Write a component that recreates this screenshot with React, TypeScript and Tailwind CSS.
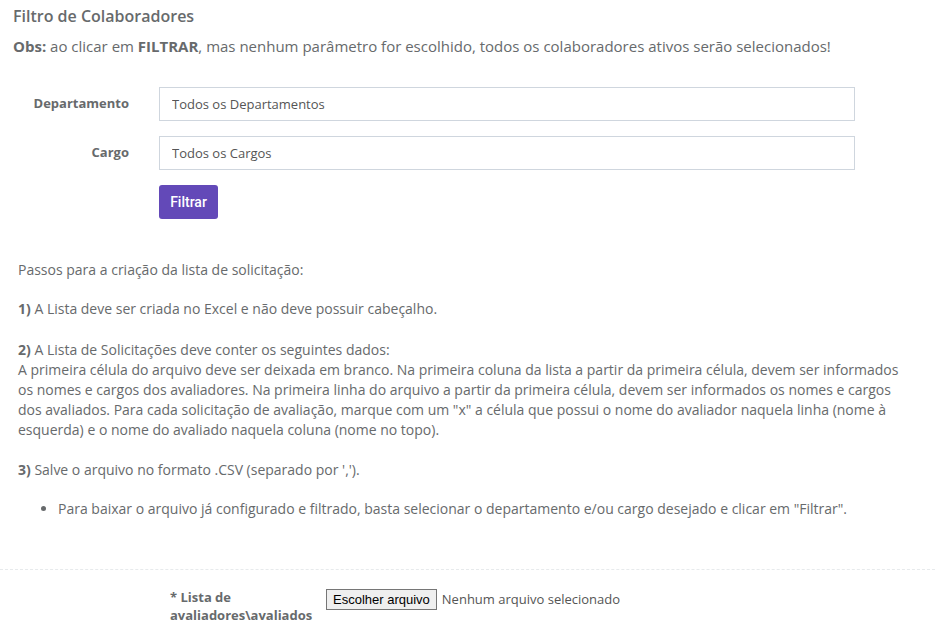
export default function App() {
  return (
    <div className="min-h-screen bg-white font-['Open_Sans',sans-serif] text-[#676a6c]">
      <div className="px-[13px] pt-[6px]">
        <h2 className="text-[16px] font-semibold leading-[20px]">Filtro de Colaboradores</h2>
        <p className="mt-[10px] text-[15px] leading-[20px]">
          <b>Obs:</b> ao clicar em <b>FILTRAR</b>, mas nenhum parâmetro for escolhido, todos os colaboradores ativos serão
          selecionados!
        </p>
      </div>

      <form className="mt-[31px] flex flex-col gap-[15px] pr-[80px]" onSubmit={(e) => e.preventDefault()}>
        <div className="grid grid-cols-[159px_1fr] items-center">
          <label className="pr-[30px] text-right text-[13px] font-bold">Departamento</label>
          <input
            readOnly
            value="Todos os Departamentos"
            className="h-[34px] w-full border border-[#cfd6de] px-[12px] text-[13px] text-[#555] outline-none"
          />
        </div>
        <div className="grid grid-cols-[159px_1fr] items-center">
          <label className="pr-[30px] text-right text-[13px] font-bold">Cargo</label>
          <input
            readOnly
            value="Todos os Cargos"
            className="h-[34px] w-full border border-[#cfd6de] px-[12px] text-[13px] text-[#555] outline-none"
          />
        </div>
        <div className="grid grid-cols-[159px_1fr]">
          <div />
          <div>
            <button className="h-[34px] w-[59px] rounded-[3px] bg-[#6349b8] font-['Roboto',sans-serif] text-[14px] font-medium text-white">
              Filtrar
            </button>
          </div>
        </div>
      </form>

      <div className="mt-[41px] px-[18px] pr-[30px] text-[14px] leading-[20px]">
        <p>Passos para a criação da lista de solicitação:</p>
        <p className="mt-[19px]">
          <b>1)</b> A Lista deve ser criada no Excel e não deve possuir cabeçalho.
        </p>
        <p className="mt-[21px]">
          <b>2)</b> A Lista de Solicitações deve conter os seguintes dados:
          <br />
          A primeira célula do arquivo deve ser deixada em branco. Na primeira coluna da lista a partir da primeira célula,
          devem ser informados os nomes e cargos dos avaliadores. Na primeira linha do arquivo a partir da primeira célula,
          devem ser informados os nomes e cargos dos avaliados. Para cada solicitação de avaliação, marque com um "x" a
          célula que possui o nome do avaliador naquela linha (nome à esquerda) e o nome do avaliado naquela coluna (nome no
          topo).
        </p>
        <p className="mt-[20px]">
          <b>3)</b> Salve o arquivo no formato .CSV (separado por ',').
        </p>
        <ul className="mt-[19px] list-disc pl-[40px]">
          <li>
            Para baixar o arquivo já configurado e filtrado, basta selecionar o departamento e/ou cargo desejado e clicar em
            "Filtrar".
          </li>
        </ul>
      </div>

      <div className="mt-[50px] border-t border-dashed border-[#e7eaec]" />

      <div className="mt-[18px] grid grid-cols-[170px_156px_1fr] items-start">
        <div />
        <label className="text-[13px] font-bold leading-[18px]">
          * Lista de
          <br />
          avaliadores\avaliados
        </label>
        <div className="flex items-center pt-[1px]">
          <button className="h-[21px] border border-[#767676] bg-[#efefef] px-[6px] font-['Liberation_Sans',sans-serif] text-[13px] text-black">
            Escolher arquivo
          </button>
          <span className="ml-[5px] text-[13px] text-[#555]">Nenhum arquivo selecionado</span>
        </div>
      </div>
    </div>
  );
}
